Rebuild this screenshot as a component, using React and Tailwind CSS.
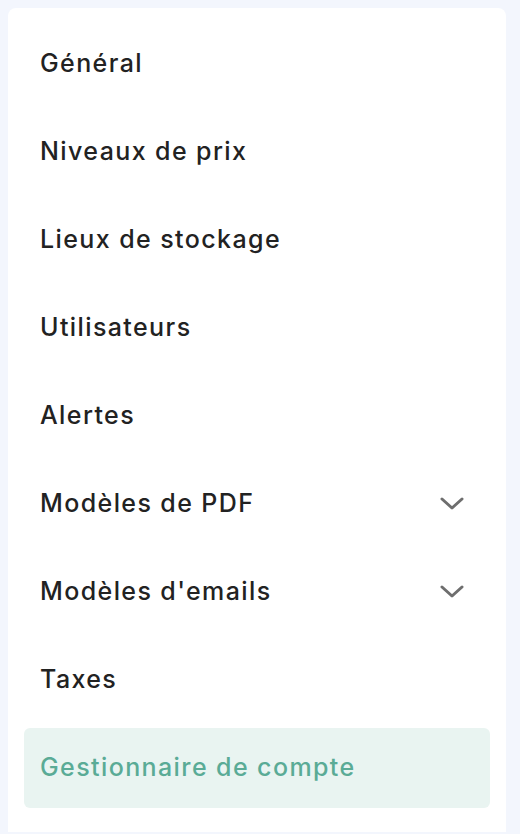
import React from 'react';

const items = [
  { label: 'Général' },
  { label: 'Niveaux de prix' },
  { label: 'Lieux de stockage' },
  { label: 'Utilisateurs' },
  { label: 'Alertes' },
  { label: 'Modèles de PDF', expandable: true },
  { label: "Modèles d'emails", expandable: true },
  { label: 'Taxes' },
  { label: 'Gestionnaire de compte', active: true }
];

const Chevron = () => (
  <svg width="24" height="24" viewBox="0 0 24 24" fill="none" stroke="#6e6e6e" strokeWidth="3" strokeLinecap="round" strokeLinejoin="round">
    <path d="M2 7l10 9 10-9" />
  </svg>
);

const App = () => {
  return (
    <div className="min-h-[834px] bg-[#f3f6fd] pl-2 pr-[14px] pt-2" style={{ fontFamily: 'Inter, "Noto Sans", sans-serif' }}>
      <nav className="flex flex-col gap-2 rounded-t-lg bg-white px-4 pb-6 pt-4">
        {items.map((item) => (
          <div
            key={item.label}
            className={`flex h-20 items-center justify-between rounded-md pl-4 pr-[26px] text-[25px] font-medium tracking-[1.4px] ${
              item.active ? 'bg-[#e9f4f1] text-[#5aab96]' : 'text-[#222222]'
            }`}
          >
            <span>{item.label}</span>
            {item.expandable && <Chevron />}
          </div>
        ))}
      </nav>
    </div>
  );
};

export default App;
